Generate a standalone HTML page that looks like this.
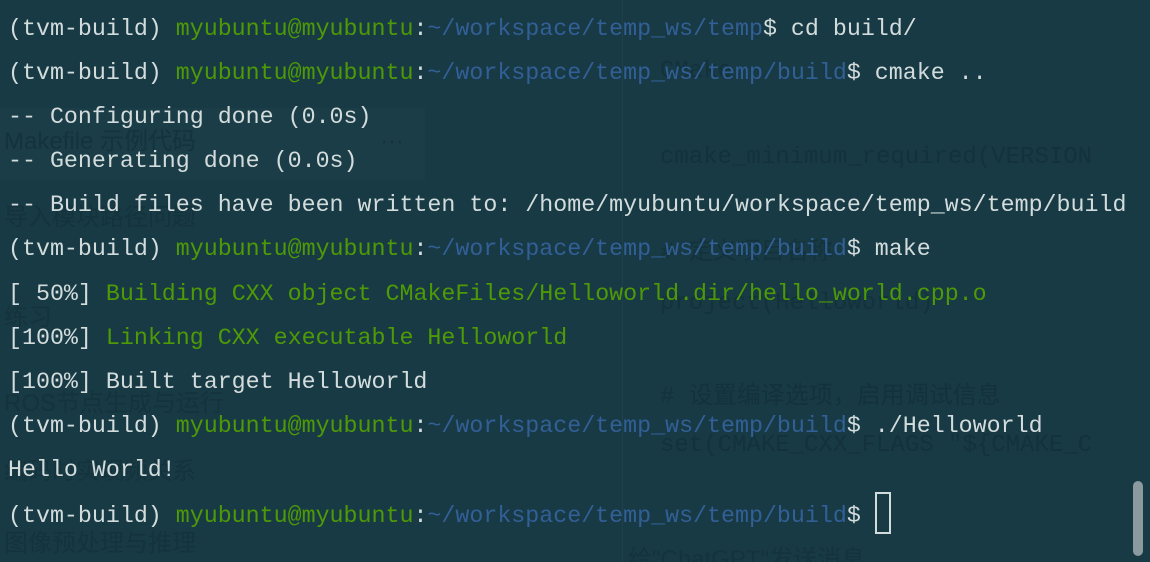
<html style="width:1150px;height:562px;overflow:hidden"><head><style>
body{margin:0;width:1150px;height:562px;background:#183a45;overflow:hidden;position:relative;font-family:"Liberation Mono","Noto Sans CJK SC",monospace}
.bg{position:absolute;color:#14333c;font-size:24px;line-height:28px;white-space:pre;font-family:"Liberation Sans","Noto Sans CJK SC",sans-serif}
.bgm{position:absolute;color:#13323b;font-size:24px;line-height:28px;white-space:pre;font-family:"Liberation Mono","Noto Sans CJK SC",monospace}
.t{position:absolute;left:8px;top:7px;font-size:23.3px;line-height:44.1px;color:#d3dcdc;white-space:pre}
.g{color:#4e9a06}.b{color:#325f96}
.cur{display:inline-block;width:16px;height:42px;border:2px solid #d3dcdc;box-sizing:border-box;vertical-align:-12px}
</style></head><body>
<div style="position:absolute;left:622px;top:0;width:1px;height:562px;background:#1d4049"></div>
<div style="position:absolute;left:0;top:108px;width:425px;height:72px;background:#1b3d47"></div>
<div class="bg" style="left:4px;top:128px">Makefile 示例代码</div>
<div class="bg" style="left:380px;top:128px">···</div>
<div class="bg" style="left:4px;top:204px">导入模块路径问题</div>
<div class="bg" style="left:4px;top:304px">练习</div>
<div class="bg" style="left:4px;top:390px">ROS节点生成与运行</div>
<div class="bg" style="left:4px;top:458px">编码时实现频关系</div>
<div class="bg" style="left:4px;top:530px">图像预处理与推理</div>
<div class="bgm" style="left:660px;top:58px">CMake</div>
<div class="bgm" style="left:660px;top:144px">cmake_minimum_required(VERSION</div>
<div class="bgm" style="left:660px;top:240px"># 定义项目名称</div>
<div class="bgm" style="left:660px;top:290px">project(Helloworld)</div>
<div class="bgm" style="left:660px;top:384px"># 设置编译选项，启用调试信息</div>
<div class="bgm" style="left:660px;top:432px">set(CMAKE_CXX_FLAGS "${CMAKE_C</div>
<div class="bg" style="left:628px;top:546px">给"ChatGPT"发送消息</div>
<div class="t">(tvm-build) <span class="g">myubuntu@myubuntu</span>:<span class="b">~/workspace/temp_ws/temp</span>$ cd build/
(tvm-build) <span class="g">myubuntu@myubuntu</span>:<span class="b">~/workspace/temp_ws/temp/build</span>$ cmake ..
-- Configuring done (0.0s)
-- Generating done (0.0s)
-- Build files have been written to: /home/myubuntu/workspace/temp_ws/temp/build
(tvm-build) <span class="g">myubuntu@myubuntu</span>:<span class="b">~/workspace/temp_ws/temp/build</span>$ make
[ 50%] <span class="g">Building CXX object CMakeFiles/Helloworld.dir/hello_world.cpp.o</span>
[100%] <span class="g">Linking CXX executable Helloworld</span>
[100%] Built target Helloworld
(tvm-build) <span class="g">myubuntu@myubuntu</span>:<span class="b">~/workspace/temp_ws/temp/build</span>$ ./Helloworld
Hello World!
(tvm-build) <span class="g">myubuntu@myubuntu</span>:<span class="b">~/workspace/temp_ws/temp/build</span>$ <span class="cur"></span></div>
<div style="position:absolute;left:1133px;top:481px;width:10px;height:75px;border-radius:5px;background:#8a9a9e"></div>
</body></html>
